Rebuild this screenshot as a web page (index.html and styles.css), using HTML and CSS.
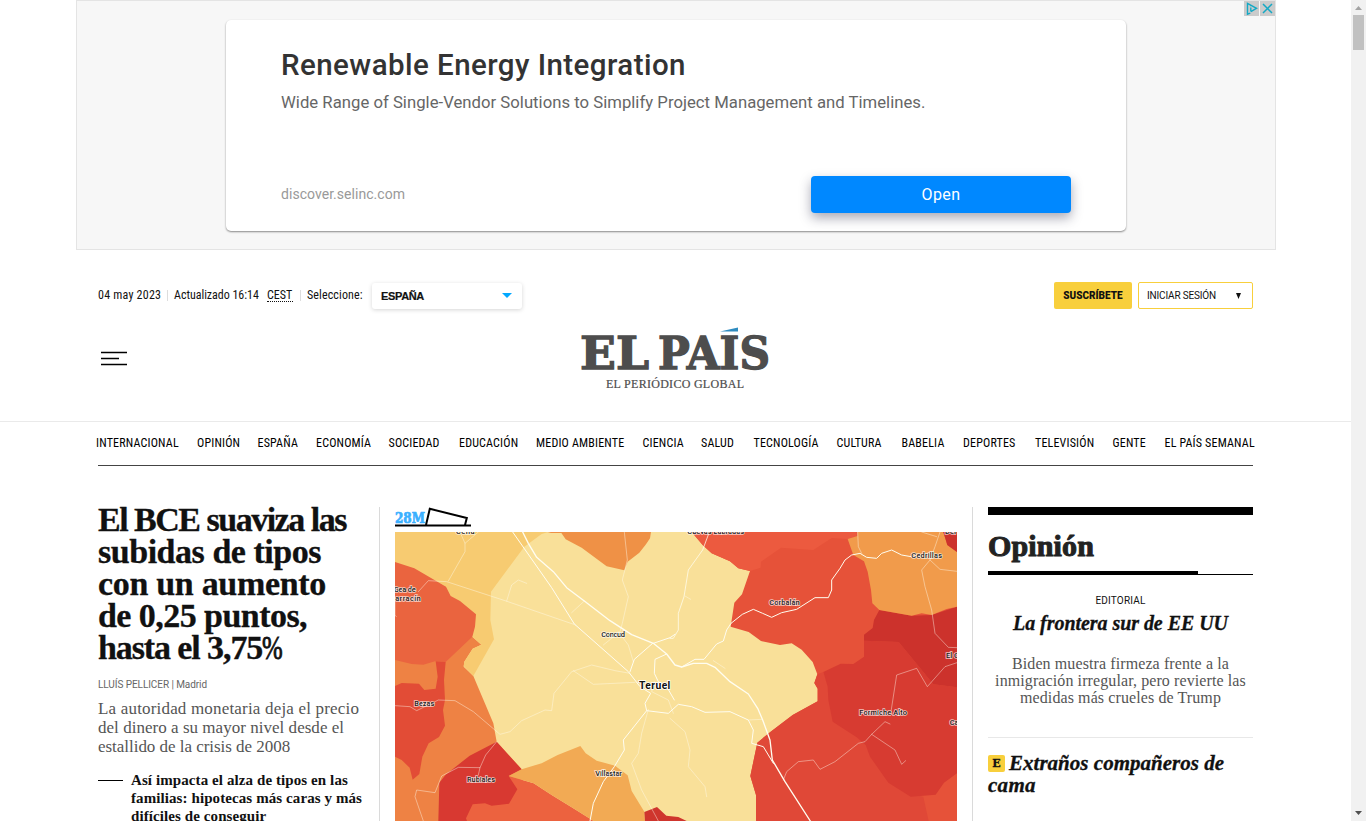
FILE: index.html
```html
<!DOCTYPE html>
<html lang="es">
<head>
<meta charset="utf-8">
<title>EL PAÍS: el periódico global</title>
<link rel="stylesheet" href="styles.css">
</head>
<body>
<div class="page">
  <div class="ad">
    <div class="ad-choices">
      <svg width="15" height="15" viewBox="0 0 15 15"><path d="M6.300 12.200l-2.800 1V2.500l9 4.800-5.600 3.300M6.800 6.500v4M6.800 4.300v1" fill="none" stroke="#14a9c5" stroke-width="1.4"/></svg>
      <svg width="15" height="15" viewBox="0 0 15 15"><path d="M3 3l9 9M12 3l-9 9" fill="none" stroke="#14a9c5" stroke-width="1.5"/></svg>
    </div>
    <div class="ad-card">
      <div class="ad-title">Renewable Energy Integration</div>
      <div class="ad-desc">Wide Range of Single-Vendor Solutions to Simplify Project Management and Timelines.</div>
      <div class="ad-foot"><span class="ad-url">discover.selinc.com</span><a class="ad-open">Open</a></div>
    </div>
  </div>

  <header class="head">
    <div class="topbar">
      <span class="date">04 may 2023</span><i class="sep s1"></i>
      <span class="upd">Actualizado 16:14</span><span class="cest">CEST</span><i class="sep s2"></i>
      <span class="sel">Seleccione:</span>
      <div class="edition"><b>ESPAÑA</b><svg width="10" height="5" viewBox="0 0 10 5"><path d="M0 0h10L5 5z" fill="#02a8ff"/></svg></div>
      <div class="actions"><a class="sub">SUSCRÍBETE</a><a class="login"><span>INICIAR SESIÓN</span><svg width="5" height="6" viewBox="0 0 5 6"><path d="M0 0h5L2.5 6z" fill="#111"/></svg></a></div>
    </div>
    <div class="brand">
      <svg class="burger" width="26" height="16" viewBox="0 0 26 16"><path d="M0 2.500h26M0 8.500h18M0 14.500h26" stroke="#000" stroke-width="1.600"/></svg>
      <svg class="logo" width="190" height="64" viewBox="0 0 190 64">
        <g class="logo-name">
          <text x="0" y="43" textLength="69" lengthAdjust="spacingAndGlyphs">EL</text>
          <text x="78" y="43" textLength="112" lengthAdjust="spacingAndGlyphs">PAIS</text>
        </g>
        <path d="M140 5.500L158 1.500v4z" fill="#2f8cc0"/>
        <text class="logo-sub" x="26" y="62" textLength="138">EL PERIÓDICO GLOBAL</text>
      </svg>
    </div>
  </header>

  <nav class="nav">
    <a>INTERNACIONAL</a><a>OPINIÓN</a><a>ESPAÑA</a><a>ECONOMÍA</a><a>SOCIEDAD</a><a>EDUCACIÓN</a><a>MEDIO AMBIENTE</a><a>CIENCIA</a><a>SALUD</a><a>TECNOLOGÍA</a><a>CULTURA</a><a>BABELIA</a><a>DEPORTES</a><a>TELEVISIÓN</a><a>GENTE</a><a>EL PAÍS SEMANAL</a>
  </nav>

  <main class="cols">
    <article class="lead">
      <h1><span class="h1a">El BCE suaviza las</span><span class="h1b">subidas de tipos</span><span class="h1c">con un aumento</span><span class="h1d">de 0,25 puntos,</span><span class="h1e">hasta el 3,75<b class="pct">%</b></span></h1>
      <p class="by">LLUÍS PELLICER | Madrid</p>
      <p class="dek"><span class="da">La autoridad monetaria deja el precio</span><span class="db">del dinero a su mayor nivel desde el</span><span class="dc">estallido de la crisis de 2008</span></p>
      <div class="related"><i></i><p><span>Así impacta el alza de tipos en las</span><span>familias: hipotecas más caras y más</span><span>difíciles de conseguir</span></p></div>
    </article>

    <section class="center">
      <svg class="tag" width="77" height="20" viewBox="0 0 77 20">
        <text x="0" y="15.500" textLength="30" lengthAdjust="spacingAndGlyphs">28M</text>
        <path d="M0 18.500h76M31 18l3.800-16.200 37 9.200-1.800 7" fill="none" stroke="#000" stroke-width="2"/>
      </svg>
      <svg class="map" width="562" height="289" viewBox="30 96 1686 867">
        <rect x="30" y="96" width="1686" height="867" fill="#f9e099"/>
        <path fill="#ee8244" d="M30 400L262 410 289 434 263 446 238 485 236 500 265 528 325 670 335 725 410 808V963H30z"/>
        <path fill="#f7cb71" d="M30 96H490L470 102 418 140 318 275 316 360 327 418 265 528 236 498 238 485 263 446 289 434 262 410 30 200z"/>
        <path fill="#ea643f" d="M30 186L88 205 183 260 197 288 225 303 273 343 270 380 262 410 182 486 150 484 115 494 80 492 30 480z"/>
        <path fill="#e24c36" d="M152 484L182 486 177 540 180 600 174 630 180 677 162 711 131 730 112 770 103 822 83 839 74 803 50 780 30 770V558L50 549 102 551 118 570 152 566 158 530z"/>
        <path fill="#ec623f" d="M371 828L446 850 500 885 560 922 626 963H240V900H372z"/>
        <path fill="#d83931" d="M335 725L410 808 371 828 397 868 372 911 320 917 300 910 263 913 243 955 246 963H160L163 848 182 824 254 767z"/>
        <path fill="#f2aa54" d="M371 828L410 808 470 790 518 765 586 738 602 760 635 782 690 797 728 826 740 873 778 935 780 963H626L560 922 500 885 446 850z"/>
        <path fill="#ef9146" d="M527 96H798L795 115 783 133 763 158 728 185 718 211 665 199 590 143 542 118zM487 99L498 96H530z"/>
        <path fill="#cf352d" d="M778 936L816 921 844 947 880 951 905 963H780z"/>
        <g transform="translate(855 0)">
          <path fill="#e65239" d="M65 96H861V963H258V885L241 828 262 728 300 697 368 645 443 604V566L433 549 442 523 428 486 395 449 365 430 330 435 273 423 236 396 182 380 193 308 216 283 240 213 205 205 180 184 125 160 98 135z"/>
          <path fill="#ec5a3f" d="M65 96H560V108L533 117 485 114 430 150 333 143 273 185 272 203 240 213 205 205 180 184 125 160 98 135z"/>
          <path fill="#e04837" d="M442 523L460 516 500 640 590 735 720 880 760 890 776 963H258V885L241 828 262 728 300 697 368 645 443 604V566L433 549z"/>
          <path fill="#d73b31" d="M460 516L512 491 550 492 582 470V422L686 426 790 553 861 562V820L822 848 797 884 722 890 655 848 600 770 587 735 560 712 488 665 475 600 473 560z"/>
          <path fill="#cc322c" d="M582 404L608 384 612 360 628 330 725 347 785 345 861 320V562L790 553 686 426 582 422z"/>
          <path fill="#f19b4b" d="M533 117L562 108V96H820L832 135 861 156V320L830 327 785 345 755 340 725 347 628 330 607 310 603 270 593 215 582 184 550 165z"/>
          <path fill="#cc322c" d="M820 96H861V156L832 135z"/>
        </g>
        <g fill="none" stroke="#fffdf0" stroke-linejoin="round" stroke-linecap="round">
          <g stroke-width="4">
            <path d="M413 96L430 130 455 172 505 215 545 263 598 303 675 362 740 404 805 430 845 462 870 495 890 501 925 490 965 490 990 502 1035 545 1090 582 1118 625 1133 660 1155 720 1162 780 1200 845 1276 963"/>
          </g>
          <g stroke-width="3">
            <path d="M383 96L500 263 568 372 730 515 765 560 797 580 780 610 785 632 715 720 718 750 688 800 655 845 625 910 615 963M805 430L855 413 870 403M890 501L930 478 957 478 995 432 1015 423 1025 390 1038 370 1072 343 1105 328 1133 340 1160 352 1190 338 1235 328 1290 293 1330 293 1340 270 1340 240 1365 205 1380 180 1400 165 1425 160 1445 172 1475 175 1490 160 1520 150 1550 165 1590 172M845 462L810 478 808 520 820 545 845 560 868 600M803 430L748 478 735 515M785 632L850 640 880 613 920 620 960 637 1035 635 1090 660 1105 690 1100 730 1135 740 1165 790"/>
          </g>
          <g stroke-width="2.800" opacity=".8"><path d="M973 96L953 150 910 210 897 290 880 340 880 390 865 415 855 415"/></g>
          <g stroke-width="2.300" opacity=".55">
            <path d="M30 300V345L34 350M100 275L130 242 185 245 360 302 572 375M190 243L240 155 240 130 225 96M240 130L280 96M365 303L380 255 400 240 425 250M560 338L598 303M718 96L727 180 712 240 730 290 712 370 705 395 655 435M700 395L730 435 745 485M30 617L75 620 95 632 160 600 210 602 265 635 345 703 375 695 410 662 480 630 500 632 507 580 560 515 620 495 690 512 735 520M565 512L625 553 750 547M790 628L770 700 760 760 740 790 770 870 820 963M335 725L302 765 285 803 220 802 170 828 150 878 95 870 90 890 115 963M285 803L280 825M808 545L800 575 850 600 865 640M855 655L900 695 915 750 910 800 960 860 965 890M985 482L1020 505M900 288L917 298M1090 660L1130 658M1195 840L1205 815 1240 785 1285 780 1305 808 1350 785 1420 730 1440 725 1460 703 1500 665 1515 672M1460 703L1530 750 1550 793 1562 782M1518 635L1535 525 1595 505 1627 560 1680 500 1716 488M1418 96L1420 140 1430 160M1610 96L1655 110M1665 96L1650 140 1635 180 1610 210 1620 260 1640 330 1650 400 1690 442 1716 443M1635 180L1665 208 1716 214"/>
          </g>
        </g>
        <g class="place">
          <text x="213" y="102" textLength="56">Cella</text>
          <text x="26" y="277" textLength="66">Gea de</text>
          <text x="17" y="304" textLength="90">barracín</text>
          <text x="88" y="619" textLength="60">Bezas</text>
          <text x="246" y="847" textLength="84">Rubiales</text>
          <text x="631" y="827" textLength="80">Villastar</text>
          <text x="649" y="412" textLength="71">Concud</text>
          <text x="907" y="102" textLength="170">Cuevas Labradas</text>
          <text x="1153" y="314" textLength="91">Corbalán</text>
          <text x="1579" y="174" textLength="92">Cedrillas</text>
          <text x="1423" y="645" textLength="143">Formiche Alto</text>
          <text x="1683" y="474">El Castellar</text>
          <text x="1694" y="674">Cabra</text>
          <text x="1680" y="102">Del</text>
        </g>
        <text class="city" x="762" y="566" textLength="94">Teruel</text>
      </svg>
    </section>

    <aside class="opinion">
      <h2>Opinión</h2>
      <p class="kick">EDITORIAL</p>
      <h3 class="ed">La frontera sur de EE UU</h3>
      <p class="eddek"><span>Biden muestra firmeza frente a la</span><span>inmigración irregular, pero revierte las</span><span>medidas más crueles de Trump</span></p>
      <h3 class="col"><span class="line"><b class="e">E</b>Extraños compañeros de</span><span class="line last">cama</span></h3>
    </aside>
  </main>
</div>
<div class="scroll">
  <svg width="7" height="4" viewBox="0 0 7 4"><path d="M0 4h7L3.500 0z" fill="#a3a3a3"/></svg>
  <i></i>
  <svg class="down" width="7" height="4" viewBox="0 0 7 4"><path d="M0 0h7L3.500 4z" fill="#505050"/></svg>
</div>
</body>
</html>
```
FILE: styles.css
```css
* { box-sizing: border-box; }
html, body { margin: 0; height: 821px; overflow: hidden; }
body { display: flex; background: #fff; color: #111; font-family: Roboto, "Liberation Sans", sans-serif; }
p, h1, h2, h3 { margin: 0; }
svg { display: block; flex: none; }
.page { width: 1351px; height: 821px; overflow: hidden; }

.scroll { width: 15px; height: 821px; background: #f1f1f1; display: flex; flex-direction: column; align-items: center; padding: 6px 0 6px; }
.scroll i { width: 11px; height: 35px; margin-top: 5px; background: #c1c1c1; }
.scroll .down { margin-top: auto; }

.ad { position: relative; width: 1200px; height: 250px; margin-left: 76px; padding: 19px 149px; background: #f7f7f7; border: 1px solid #e4e4e4; }
.ad-choices { position: absolute; top: 0; right: 0; display: flex; gap: 1px; }
.ad-choices svg { background: #cbcbcb; }
.ad-card { height: 211px; padding: 28px 55px 0; background: #fff; border-radius: 5px; box-shadow: 0 1px 2px rgba(0,0,0,.45); display: flex; flex-direction: column; white-space: nowrap; }
.ad-title { font-size: 29.500px; font-weight: 500; line-height: 34px; letter-spacing: .44px; color: #333; }
.ad-desc { margin-top: 11px; font-size: 16.700px; line-height: 20px; letter-spacing: .02px; color: #666; }
.ad-foot { margin-top: 63px; display: flex; justify-content: space-between; align-items: center; }
.ad-url { margin-top: -2px; font-size: 14px; letter-spacing: .04px; color: #999; }
.ad-open { width: 260px; height: 37px; border-radius: 4px; background: #08f; color: #fff; font-size: 16px; line-height: 37px; letter-spacing: .4px; text-align: center; box-shadow: 0 5px 12px rgba(40,40,70,.4); }

.head { height: 172px; padding: 32px 98px 0; border-bottom: 1px solid #eaeaea; }
.topbar { display: flex; align-items: center; height: 27px; font-family: "Roboto Condensed", Roboto, sans-serif; font-size: 12px; line-height: 14px; white-space: nowrap; color: #111; }
.sep { width: 1px; height: 11px; background: #ddd; }
.date, .upd, .sel { padding-bottom: 2px; }
.date { width: 63px; letter-spacing: .22px; }
.s1 { margin: 0 6px; }
.upd { width: 85px; letter-spacing: -.03px; }
.cest { width: 26px; margin-left: 8px; line-height: 12px; border-bottom: 1px dotted #111; }
.s2 { margin: 0 6px 0 7px; }
.sel { width: 56px; letter-spacing: .12px; }
.edition { width: 150px; height: 26px; margin: 1px 0 0 9px; padding: 0 10px 0 9px; display: flex; align-items: center; justify-content: space-between; border-radius: 3px; box-shadow: 0 1px 4px rgba(0,0,0,.17); font-family: "Liberation Sans", sans-serif; font-size: 11px; letter-spacing: -.35px; }
.edition b { -webkit-text-stroke: .2px #111; }
.edition svg { margin-bottom: 1px; }
.actions { margin-left: auto; display: flex; gap: 6px; font-size: 10px; font-family: Roboto, sans-serif; }
.sub { width: 78px; height: 27px; border-radius: 2px; background: #f8cf3c; font-weight: 900; line-height: 27px; text-align: center; }
.login { width: 115px; height: 27px; padding: 0 11px 0 8px; border: 1px solid #f8cf3c; border-radius: 2px; display: flex; align-items: center; justify-content: space-between; letter-spacing: -.17px; }
.brand { margin-top: 18px; display: flex; align-items: center; height: 62px; }
.burger { margin-left: 3px; }
.logo { margin-left: 453px; }
.logo-name { font: bold 45px "DejaVu Serif", serif; fill: #4d4d4d; stroke: #4d4d4d; stroke-width: 1.300px; }
.logo-sub { font: 12px "Liberation Serif", serif; fill: #4d4d4d; stroke: #4d4d4d; stroke-width: .2px; }

.nav { display: grid; grid-template-columns: 101px 60.500px 58.500px 72.500px 70.500px 77px 106.500px 58.500px 52.500px 83px 65px 61.500px 72px 77.500px 52px 90px; align-items: center; height: 44px; width: 1155px; margin-left: 98px; padding-bottom: 2px; border-bottom: 1px solid #444; font: 12px "Roboto Condensed", Roboto, sans-serif; letter-spacing: .18px; white-space: nowrap; color: #000; }
.nav a { margin-left: -2px; }

.cols { display: flex; margin: 41px 0 0 98px; width: 1155px; height: 314px; white-space: nowrap; font-family: "Liberation Serif", serif; }
.lead { width: 282px; border-right: 1px solid #dadada; }
.lead span, .eddek span, .line { display: block; }
h1 { font-size: 34px; line-height: 32px; margin-top: -3px; font-weight: bold; -webkit-text-stroke: .3px #111; }
.h1a { letter-spacing: -1.5px; }
.h1b { letter-spacing: -.47px; }
.h1c { letter-spacing: -.31px; }
.h1d { letter-spacing: -.55px; }
.h1e { letter-spacing: -1.1px; }
.pct { display: inline-block; width: 21px; transform: scaleX(.73); transform-origin: left; font-weight: normal; letter-spacing: 0; -webkit-text-stroke: .9px #111; }
.by { margin-top: 15px; font: 10px/12px Roboto, sans-serif; letter-spacing: -.07px; color: #666; }
.dek { margin-top: 8px; font-size: 17px; line-height: 19px; color: #555; }
.da { letter-spacing: .18px; }
.db { letter-spacing: .03px; }
.dc { letter-spacing: -.03px; }
.related { display: flex; margin-top: 15px; }
.related i { width: 25px; height: 1px; margin: 9px 8px 0 0; background: #000; }
.related p { font-size: 15px; line-height: 18px; font-weight: bold; letter-spacing: .09px; }

.center { width: 577px; padding-left: 15px; }
.tag { margin-bottom: 5px; }
.tag text { font: bold 14px "DejaVu Serif", serif; fill: #3ab0ff; stroke: #3ab0ff; stroke-width: .7px; }
.place text { font: 500 22.500px Roboto, sans-serif; fill: #222; stroke: rgba(255,255,255,.7); stroke-width: 5px; paint-order: stroke; }
.city { font: bold 31px Roboto, sans-serif; fill: #111; stroke: #fff; stroke-width: 5px; paint-order: stroke; }

.opinion { width: 281px; margin-left: 15px; padding-left: 15px; border-left: 1px solid #dadada; flex: none; }
h2 { position: relative; height: 68px; padding-top: 14px; border-top: 8px solid #000; border-bottom: 1px solid #000; font-size: 30px; line-height: 34px; color: #222; -webkit-text-stroke: 1px #222; letter-spacing: .13px; }
h2::after { content: ""; position: absolute; left: 0; bottom: -1px; width: 210px; height: 4px; background: #000; }
.kick { margin-top: 20px; font: 10px/12px Roboto, sans-serif; letter-spacing: .18px; text-align: center; }
h3 { font-size: 20px; font-style: italic; font-weight: bold; line-height: 22px; -webkit-text-stroke: .3px #111; }
.ed { margin-top: 5px; text-align: center; letter-spacing: -.05px; }
.eddek { margin-top: 21px; font-size: 16px; line-height: 17px; letter-spacing: .1px; text-align: center; color: #555; padding-bottom: 31px; border-bottom: 1px solid #e8e8e8; }
.col { margin-top: 14px; font-size: 21px; letter-spacing: .02px; }
.line { display: flex; align-items: center; height: 22px; }
.last { letter-spacing: .3px; }
.e { width: 17px; height: 17px; margin-right: 4px; border-radius: 2px; background: #f8cf3c; font: bold 11px/17px "DejaVu Serif", serif; text-align: center; letter-spacing: 0; }
```
